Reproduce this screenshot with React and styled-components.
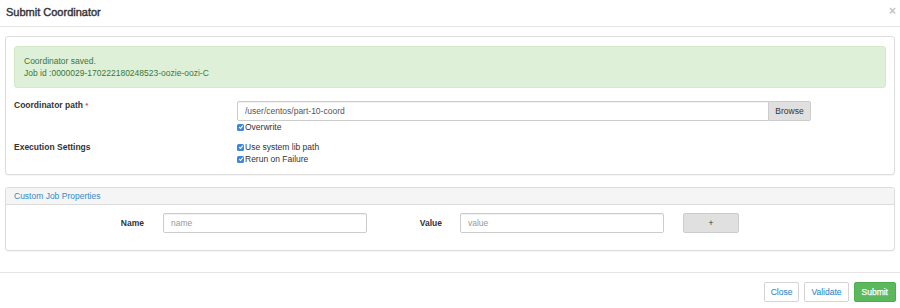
import React from 'react';
import styled, { createGlobalStyle } from 'styled-components';

const GlobalStyle = createGlobalStyle`
    html, body {
        margin: 0;
        padding: 0;
        background: #fff;
    }
    body {
        font-family: "Liberation Sans", Arial, sans-serif;
        font-size: 8.5px;
        color: #333;
    }
`;

const Modal = styled.div`
    width: 900px;
    height: 308px;
    background: #fff;
`;

const Header = styled.div`
    display: flex;
    justify-content: space-between;
    align-items: center;
    height: 27px;
    padding: 0 6px;
    border-bottom: 1px solid #e5e5e5;
    box-sizing: border-box;
`;

const Title = styled.div`
    font-size: 11px;
    line-height: 14px;
    color: #333;
    -webkit-text-stroke: 0.4px #333;
    margin-top: -3px;
`;

const CloseX = styled.span`
    font-size: 12px;
    font-weight: bold;
    color: #c4c4c4;
    line-height: 12px;
    margin-top: -5px;
    margin-right: -2px;
`;

const Body = styled.div`
    padding: 9px 5px 21px;
`;

const Panel = styled.div`
    border: 1px solid #ddd;
    border-radius: 3px;
    background: #fff;
    box-shadow: 0 1px 1px rgba(0, 0, 0, 0.04);
    & + & {
        margin-top: 12px;
    }
`;

const PanelBody = styled.div`
    padding: 9px 8px 9px;
`;

const Alert = styled.div`
    background: #dff0d8;
    border: 1px solid #d6e9c6;
    border-radius: 3px;
    color: #3c763d;
    line-height: 12px;
    padding: 8px 9px;
`;

const FormGrid = styled.div`
    display: grid;
    grid-template-columns: 223px 574px;
    row-gap: 8px;
    margin-top: 11px;
`;

const Label = styled.div`
    font-weight: bold;
    line-height: 12px;
    color: #333;
`;

const Req = styled.span`
    color: #d9534f;
    font-size: 8px;
`;

const Controls = styled.div`
    display: flex;
    flex-direction: column;
`;

const InputGroup = styled.div`
    display: flex;
    margin-top: 2px;
    height: 20px;
`;

const TextInput = styled.input`
    box-sizing: border-box;
    height: 20px;
    width: 100%;
    flex: ${(p) => (p.$grow ? 1 : 'none')};
    border: 1px solid #ccc;
    border-radius: ${(p) => (p.$joined ? '2px 0 0 2px' : '2px')};
    box-shadow: inset 0 1px 1px rgba(0, 0, 0, 0.06);
    padding: 0 7px;
    font-family: "Liberation Sans", Arial, sans-serif;
    font-size: 8.5px;
    color: #555;
    outline: none;
    &::placeholder {
        color: #999;
    }
`;

const AddonButton = styled.button`
    box-sizing: border-box;
    height: 20px;
    width: 42px;
    border: 1px solid #ccc;
    border-left: none;
    border-radius: 0 2px 2px 0;
    background: #e0e0e0;
    color: #333;
    font-family: "Liberation Sans", Arial, sans-serif;
    font-size: 8.5px;
    padding: 0;
`;

const CheckRow = styled.label`
    display: flex;
    align-items: center;
    line-height: 12px;
    height: 12px;
    color: #333;
`;

const Box = styled.span`
    display: inline-flex;
    align-items: center;
    justify-content: center;
    width: 7px;
    height: 7px;
    border-radius: 1.5px;
    background: #3f86dc;
    margin-right: 1px;
`;

const PanelHeading = styled.div`
    background: #f5f5f5;
    border-bottom: 1px solid #ddd;
    border-radius: 3px 3px 0 0;
    height: 16px;
    line-height: 16px;
    padding: 0 8px;
    color: #338bc7;
`;

const PropRow = styled.div`
    display: grid;
    grid-template-columns: 138px 204px 55px 204px 56px;
    column-gap: 19px;
    align-items: center;
    padding: 8px 0 17px;
`;

const PropLabel = styled.div`
    font-weight: bold;
    text-align: right;
    color: #333;
    margin-right: ${(p) => p.$nudge || 0}px;
`;

const AddButton = styled.button`
    box-sizing: border-box;
    height: 20px;
    border: 1px solid #ccc;
    border-radius: 2px;
    background: #e0e0e0;
    color: #333;
    font-family: "Liberation Sans", Arial, sans-serif;
    font-size: 8.5px;
    padding: 0;
`;

const Footer = styled.div`
    display: flex;
    justify-content: flex-end;
    gap: 5px;
    border-top: 1px solid #e5e5e5;
    padding: 9px 4px 0;
`;

const FooterButton = styled.button`
    box-sizing: border-box;
    height: 20px;
    padding: 0 ${(p) => (p.$primary ? 7 : 6)}px;
    border: 1px solid ${(p) => (p.$primary ? '#4cae4c' : '#d4d4d4')};
    border-radius: 2px;
    background: ${(p) => (p.$primary ? '#5cb85c' : '#fff')};
    color: ${(p) => (p.$primary ? '#fff' : '#338bc7')};
    font-family: "Liberation Sans", Arial, sans-serif;
    font-size: 8.5px;
    -webkit-text-stroke: ${(p) => (p.$primary ? '0.25px #fff' : '0.1px #338bc7')};
`;

const Check = ({ children }) => (
    <CheckRow>
        <Box>
            <svg width="6" height="6" viewBox="0 0 10 10">
                <path d="M2 5.2 L4.2 7.4 L8 2.8" fill="none" stroke="#fff" strokeWidth="1.8" />
            </svg>
        </Box>
        {children}
    </CheckRow>
);

const App = () => {
    return (
        <Modal>
            <GlobalStyle />
            <Header>
                <Title>Submit Coordinator</Title>
                <CloseX>×</CloseX>
            </Header>
            <Body>
                <Panel>
                    <PanelBody>
                        <Alert>
                            Coordinator saved.
                            <br />
                            Job id :0000029-170222180248523-oozie-oozi-C
                        </Alert>
                        <FormGrid>
                            <Label>
                                Coordinator path <Req>*</Req>
                            </Label>
                            <Controls>
                                <InputGroup>
                                    <TextInput $grow $joined defaultValue="/user/centos/part-10-coord" />
                                    <AddonButton>Browse</AddonButton>
                                </InputGroup>
                                <Check>Overwrite</Check>
                            </Controls>
                            <Label>Execution Settings</Label>
                            <Controls>
                                <Check>Use system lib path</Check>
                                <Check>Rerun on Failure</Check>
                            </Controls>
                        </FormGrid>
                    </PanelBody>
                </Panel>
                <Panel>
                    <PanelHeading>Custom Job Properties</PanelHeading>
                    <PropRow>
                        <PropLabel>Name</PropLabel>
                        <TextInput placeholder="name" />
                        <PropLabel $nudge={-1}>Value</PropLabel>
                        <TextInput placeholder="value" />
                        <AddButton>+</AddButton>
                    </PropRow>
                </Panel>
            </Body>
            <Footer>
                <FooterButton>Close</FooterButton>
                <FooterButton>Validate</FooterButton>
                <FooterButton $primary>Submit</FooterButton>
            </Footer>
        </Modal>
    );
};

export default App;
